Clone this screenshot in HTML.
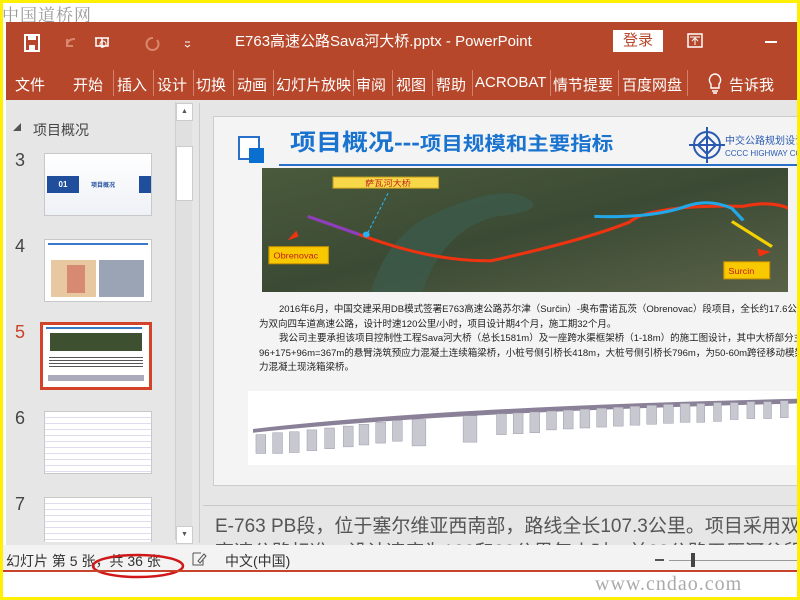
<!DOCTYPE html>
<html><head><meta charset="utf-8"><style>
*{margin:0;padding:0;box-sizing:border-box}
body{width:800px;height:600px;overflow:hidden;background:#ffef00;font-family:"Liberation Sans","Noto Sans CJK SC",sans-serif;position:relative}
.abs{position:absolute}
#inner{left:3px;top:3px;width:794px;height:594px;background:#fff;overflow:hidden}
.tab{position:absolute;top:71px;color:#fff;font-size:15px}
.sep{position:absolute;top:67px;width:1px;height:26px;background:#d2826c}
.thumb{position:absolute;left:41px;width:108px;background:#fff;border:1px solid #c8c8c8}
.num{position:absolute;left:12px;font-size:18px;color:#444}
</style></head><body>
<div id="inner" class="abs">
<div class="abs" style="left:-1px;top:-2px;font-size:17px;color:#9a9a9a;font-family:'Noto Serif CJK SC',serif;letter-spacing:1px">中国道桥网</div>
<div class="abs" style="left:3px;top:19px;width:791px;height:78px;background:#b7472a"></div>
<svg class="abs" style="left:20px;top:29px" width="170" height="22">
<rect x="2" y="3" width="14" height="16" fill="none" stroke="#fff" stroke-width="2"/><rect x="5" y="3" width="8" height="5" fill="#fff"/><rect x="6" y="13" width="6" height="5" fill="#fff"/>
<path d="M44 14 q0-7 8-7 M44 7 v7 h6" stroke="#d98870" stroke-width="2" fill="none"/>
<path d="M72 6 h14 M79 6 v10 M73 6 v8 h12 v-8" stroke="#fff" stroke-width="1.5" fill="none"/><circle cx="80" cy="12" r="3" fill="none" stroke="#fff"/>
<path d="M130 6 a6 6 0 1 0 4 2" stroke="#d98870" stroke-width="2" fill="none"/>
<path d="M162 10 h5 M162 13 l2.5 2 2.5-2" stroke="#fff" fill="none"/>
</svg>
<div class="abs" style="left:232px;top:27px;color:#fff;font-size:15px">E763高速公路Sava河大桥.pptx - PowerPoint</div>
<div class="abs" style="left:610px;top:27px;width:50px;height:22px;background:#fff;color:#b7472a;font-size:15px;text-align:center;line-height:22px">登录</div>
<svg class="abs" style="left:683px;top:29px" width="20" height="18"><rect x="2" y="2" width="14" height="13" fill="none" stroke="#fff" stroke-width="1.5"/><path d="M9 13 v-7 M6 9 l3-3 3 3 M4 5 h10" stroke="#fff" fill="none"/></svg>
<div class="abs" style="left:762px;top:38px;width:12px;height:2px;background:#fff"></div>
<div class="tab" style="left:12px">文件</div>
<div class="tab" style="left:70px">开始</div><div class="sep" style="left:110px"></div>
<div class="tab" style="left:114px">插入</div><div class="sep" style="left:150px"></div>
<div class="tab" style="left:154px">设计</div><div class="sep" style="left:190px"></div>
<div class="tab" style="left:193px">切换</div><div class="sep" style="left:230px"></div>
<div class="tab" style="left:234px">动画</div><div class="sep" style="left:270px"></div>
<div class="tab" style="left:273px;width:77px;overflow:hidden;white-space:nowrap">幻灯片放映</div><div class="sep" style="left:350px"></div>
<div class="tab" style="left:353px">审阅</div><div class="sep" style="left:389px"></div>
<div class="tab" style="left:393px">视图</div><div class="sep" style="left:429px"></div>
<div class="tab" style="left:433px">帮助</div><div class="sep" style="left:469px"></div>
<div class="tab" style="left:472px">ACROBAT</div><div class="sep" style="left:547px"></div>
<div class="tab" style="left:550px">情节提要</div><div class="sep" style="left:615px"></div>
<div class="tab" style="left:619px">百度网盘</div><div class="sep" style="left:684px"></div>
<svg class="abs" style="left:704px;top:69px" width="16" height="24"><path d="M8 2 a6 6 0 0 0-4 10 v4 h8 v-4 a6 6 0 0 0-4-10z M5 19 h6 M6 21 h4" stroke="#fff" stroke-width="1.4" fill="none"/></svg>
<div class="tab" style="left:726px">告诉我</div>
<div class="abs" style="left:3px;top:97px;width:791px;height:445px;background:#e6e6e6"></div>
<div class="abs" style="left:10px;top:119px;font-size:8px;color:#555">◢</div>
<div class="abs" style="left:30px;top:117px;font-size:14px;color:#444">项目概况</div>
<div class="abs" style="left:172px;top:99px;width:17px;height:438px;background:#e0e0e0;border-left:1px solid #d0d0d0"></div>
<div class="abs" style="left:173px;top:100px;width:17px;height:18px;background:#fff;border:1px solid #ccc;font-size:7px;color:#555;text-align:center;line-height:16px">▲</div>
<div class="abs" style="left:173px;top:143px;width:17px;height:55px;background:#fff;border:1px solid #ccc"></div>
<div class="abs" style="left:173px;top:523px;width:17px;height:18px;background:#fff;border:1px solid #ccc;font-size:7px;color:#555;text-align:center;line-height:16px">▼</div>
<div class="abs" style="left:196px;top:100px;width:1px;height:440px;background:#ccc"></div>
<div class="num" style="top:147px">3</div>
<div class="thumb" style="top:150px;height:63px;background:linear-gradient(#fff,#eef1f6)"><div class="abs" style="left:2px;top:22px;width:32px;height:17px;background:#1f4e9c;color:#fff;font-size:8px;font-weight:bold;text-align:center;line-height:17px">01</div><div class="abs" style="left:46px;top:26px;font-size:6px;color:#1f4e9c;font-weight:bold">项目概况</div><div class="abs" style="right:0;top:22px;width:12px;height:17px;background:#1f4e9c"></div></div>
<div class="num" style="top:233px">4</div>
<div class="thumb" style="top:236px;height:63px"><div class="abs" style="left:6px;top:20px;width:45px;height:37px;background:#e8c8a0"></div><div class="abs" style="left:22px;top:25px;width:18px;height:28px;background:#d88a70"></div><div class="abs" style="left:54px;top:20px;width:45px;height:37px;background:#9aa4b4"></div><div class="abs" style="left:3px;top:3px;width:100px;height:2px;background:#3a78c8"></div></div>
<div class="num" style="top:319px;color:#c9432a">5</div>
<div class="abs" style="left:37px;top:319px;width:112px;height:68px;border:3px solid #d2442a;background:#fff"><div class="abs" style="left:7px;top:8px;width:92px;height:18px;background:#3d5030"></div><div class="abs" style="left:3px;top:2px;width:96px;height:2px;background:#3a78c8"></div><div class="abs" style="left:6px;top:32px;width:94px;height:12px;background:repeating-linear-gradient(#555 0 1px,#fff 1px 3px)"></div><div class="abs" style="left:5px;top:50px;width:96px;height:6px;background:#aab"></div></div>
<div class="num" style="top:405px">6</div>
<div class="thumb" style="top:408px;height:63px;background:repeating-linear-gradient(#fff 0 5px,#dde 5px 6px)"></div>
<div class="num" style="top:491px">7</div>
<div class="thumb" style="top:494px;height:45px;border-bottom:none;background:repeating-linear-gradient(#fff 0 5px,#dde 5px 6px)"></div>
<div class="abs" style="left:210px;top:113px;width:590px;height:370px;background:#f4f4f5;border:1px solid #ccc"></div>
<div class="abs" style="left:235px;top:133px;width:22px;height:24px;border:2px solid #2a6fc8;background:#fff"></div>
<div class="abs" style="left:246px;top:145px;width:15px;height:15px;background:#0b6fd0"></div>
<div class="abs" style="left:287px;top:120px;font-size:23px;font-weight:bold;color:#1a74cf;white-space:nowrap;transform:scaleX(1.13);transform-origin:left">项目概况---<span style="font-size:19px">项目规模和主要指标</span></div>
<div class="abs" style="left:276px;top:161px;width:521px;height:2px;background:#2a6fc8"></div>
<svg class="abs" style="left:684px;top:122px" width="40" height="40"><circle cx="20" cy="20" r="13" fill="none" stroke="#2a5ab0" stroke-width="2"/><path d="M20 2 v36 M2 20 h36 M20 11 l9 9 -9 9 -9-9z" stroke="#2a5ab0" stroke-width="2" fill="#fff"/></svg>
<div class="abs" style="left:722px;top:129px;font-size:10px;color:#2a5ab0;white-space:nowrap">中交公路规划设计</div>
<div class="abs" style="left:722px;top:146px;font-size:8px;color:#2a5ab0;white-space:nowrap">CCCC HIGHWAY CONS</div>
<svg class="abs" style="left:259px;top:165px" width="526" height="124" viewBox="0 0 459 123" preserveAspectRatio="none">
<defs><linearGradient id="g" x1="0" x2="1" y1="0" y2="1"><stop offset="0" stop-color="#4a5a3c"/><stop offset=".5" stop-color="#3b4a34"/><stop offset="1" stop-color="#5a6248"/></linearGradient></defs>
<rect width="459" height="123" fill="url(#g)"/>
<path d="M95 123 q15-60 60-80 q60-30 80-10 q10 10-30 15 q-40 10-60 60 l-5 15z" fill="#3c5a4a" opacity=".8"/>
<path d="M40 48 l50 20 q60 25 110 24 q80-20 120-38 q20-18 100-16 q40-10 60 20 l20 32" stroke="#e31" stroke-width="3" fill="none"/>
<path d="M40 48 l45 18" stroke="#8a3ec0" stroke-width="3" fill="none"/>
<path d="M290 48 q50 2 80-10 q20-8 40 2 l10 12" stroke="#22a8e8" stroke-width="3" fill="none"/>
<path d="M410 53 l35 25" stroke="#f5d000" stroke-width="3" fill="none"/>
<line x1="110" y1="25" x2="92" y2="65" stroke="#2ab0f0" stroke-dasharray="3 2"/>
<circle cx="91" cy="66" r="3" fill="#2ab0f0"/>
<rect x="62" y="9" width="92" height="11" fill="#f8d848" stroke="#c8a020"/><text x="90" y="18" font-size="8" fill="#c02020" font-family="Noto Sans CJK SC">萨瓦河大桥</text>
<rect x="6" y="78" width="52" height="17" fill="#f8c800" stroke="#c89000"/><text x="10" y="90" font-size="8" fill="#c02020">Obrenovac</text>
<rect x="403" y="93" width="40" height="17" fill="#f8c800" stroke="#c89000"/><text x="407" y="105" font-size="8" fill="#c02020">Surcin</text>
<path d="M22 72 l8-10 l2 6z M432 80 l12 3 -10 5z" fill="#e31"/>
</svg>
<div class="abs" style="left:256px;top:300px;width:560px;font-size:9.5px;line-height:14.5px;color:#222;white-space:nowrap;overflow:hidden"><div style="padding-left:20px">2016年6月，中国交建采用DB模式签署E763高速公路苏尔津（Surčin）-奥布雷诺瓦茨（Obrenovac）段项目，全长约17.6公里</div><div>为双向四车道高速公路，设计时速120公里/小时，项目设计期4个月，施工期32个月。</div><div style="padding-left:20px">我公司主要承担该项目控制性工程Sava河大桥（总长1581m）及一座跨水渠框架桥（1-18m）的施工图设计，其中大桥部分主桥</div><div>96+175+96m=367m的悬臂浇筑预应力混凝土连续箱梁桥，小桩号侧引桥长418m，大桩号侧引桥长796m，为50-60m跨径移动模架施工</div><div>力混凝土现浇箱梁桥。</div></div>
<div class="abs" style="left:245px;top:388px;width:555px;height:74px;background:#fff"></div>
<svg class="abs" style="left:250px;top:392px" width="545" height="66" viewBox="0 0 555 70" preserveAspectRatio="none">
<path d="M0 36 Q200 12 555 4 L555 9 Q200 18 0 40z" fill="#8a8198"/>
<g fill="#c8c8d0" stroke="#9a98a8" stroke-width=".5">
<rect x="3" y="42" width="10" height="20"/><rect x="20" y="40" width="10" height="22"/><rect x="37" y="39" width="10" height="22"/><rect x="55" y="37" width="10" height="22"/><rect x="73" y="35" width="10" height="22"/><rect x="92" y="33" width="10" height="22"/><rect x="108" y="31" width="10" height="22"/><rect x="125" y="29" width="10" height="22"/><rect x="142" y="27" width="10" height="22"/><rect x="162" y="26" width="14" height="28"/><rect x="214" y="22" width="14" height="28"/><rect x="248" y="20" width="10" height="22"/><rect x="265" y="19" width="10" height="22"/><rect x="282" y="18" width="10" height="22"/><rect x="299" y="17" width="10" height="20"/><rect x="316" y="16" width="10" height="20"/><rect x="333" y="15" width="10" height="20"/><rect x="350" y="14" width="10" height="20"/><rect x="367" y="13" width="10" height="20"/><rect x="384" y="12" width="10" height="20"/><rect x="401" y="11" width="10" height="20"/><rect x="418" y="10" width="10" height="20"/><rect x="435" y="9" width="10" height="20"/><rect x="452" y="9" width="8" height="20"/><rect x="469" y="8" width="8" height="20"/><rect x="486" y="8" width="8" height="18"/><rect x="503" y="7" width="8" height="18"/><rect x="520" y="7" width="8" height="18"/><rect x="537" y="6" width="8" height="18"/>
</g></svg>
<div class="abs" style="left:200px;top:502px;width:594px;height:1px;background:#c8c8c8"></div>
<div class="abs" style="left:198px;top:503px;width:596px;height:39px;background:#e6e6e6;overflow:hidden"><div style="position:absolute;left:14px;top:8px;font-size:19px;color:#555;white-space:nowrap;line-height:26px">E-763 PB段，位于塞尔维亚西南部，路线全长107.3公里。项目采用双向<br>高速公路标准，设计速度为120和80公里每小时，前22公路平原河谷段兴</div></div>
<div class="abs" style="left:0;top:542px;width:794px;height:25px;background:#f3f3f3"></div>
<div class="abs" style="left:3px;top:548px;font-size:14px;color:#333;white-space:nowrap">幻灯片 第 5 张，共 36 张</div>
<svg class="abs" style="left:85px;top:543px" width="100" height="36"><ellipse cx="50" cy="20" rx="45" ry="11" fill="none" stroke="#d01818" stroke-width="2.5"/></svg>
<svg class="abs" style="left:188px;top:548px" width="16" height="16"><path d="M2 2 h8 M2 2 v12 h10 v-5 M7 10 l6-7 2 2-6 7z" stroke="#555" fill="none"/></svg>
<div class="abs" style="left:222px;top:548px;font-size:14px;color:#333">中文(中国)</div>
<div class="abs" style="left:652px;top:556px;width:9px;height:2px;background:#555"></div>
<div class="abs" style="left:666px;top:557px;width:128px;height:1px;background:#999"></div>
<div class="abs" style="left:688px;top:550px;width:4px;height:14px;background:#444"></div>
<div class="abs" style="left:0;top:567px;width:794px;height:2px;background:#c9432a"></div>
<div class="abs" style="left:592px;top:570px;font-size:20px;color:#aaa;font-family:'Liberation Serif',serif;letter-spacing:1px">www.cndao.com</div>
</div>
</body></html>
